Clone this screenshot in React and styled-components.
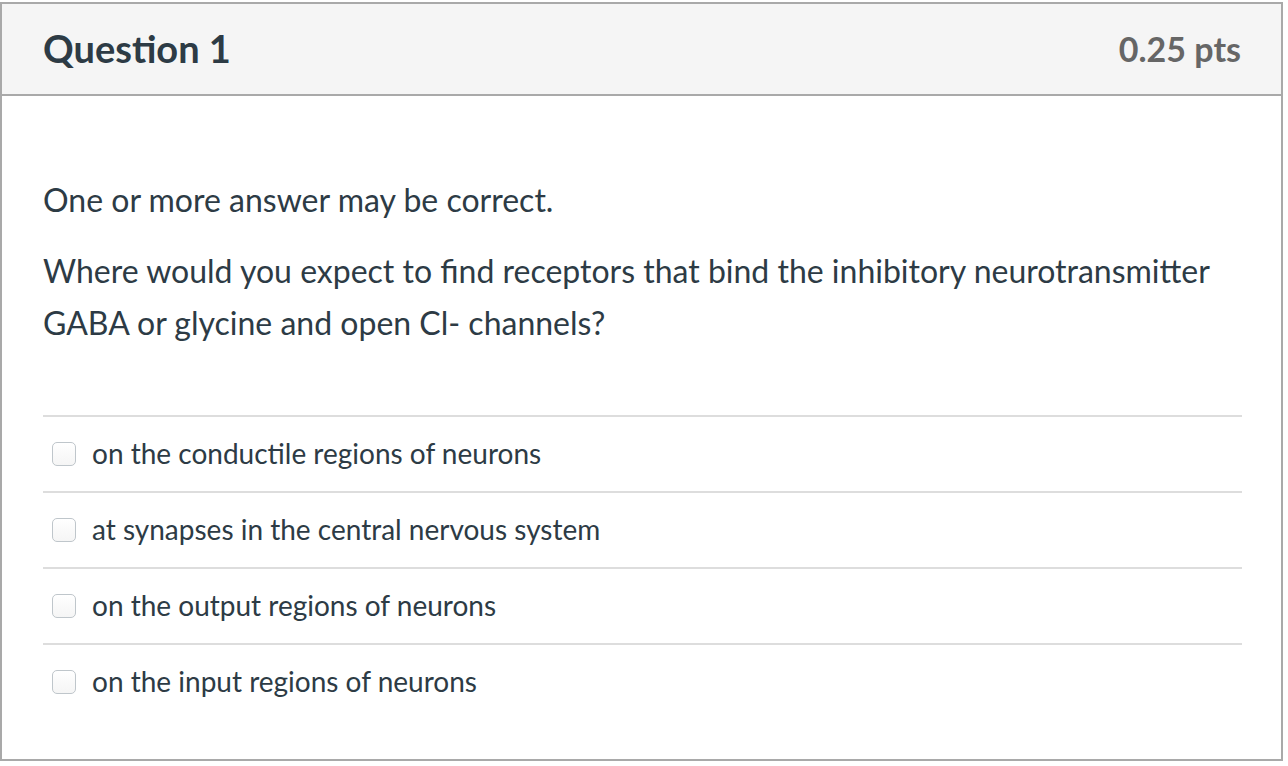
import React from 'react'
import styled, { createGlobalStyle } from 'styled-components'

const Global = createGlobalStyle`
  body {
    margin: 0;
    background: #fff;
    font-family: 'Lato', 'Liberation Sans', sans-serif;
    color: #2d3b45;
  }
`

const Card = styled.div`
  box-sizing: border-box;
  width: 1283px;
  height: 759px;
  margin-top: 2px;
  border: 2px solid #a9a9a9;
  display: flex;
  flex-direction: column;
`

const Header = styled.div`
  box-sizing: border-box;
  height: 92px;
  background: #f5f5f5;
  border-bottom: 2px solid #a9a9a9;
  display: flex;
  align-items: center;
  justify-content: space-between;
  padding: 0 40px 2px 41px;
`

const Title = styled.h2`
  margin: 0;
  font-size: 38px;
  font-weight: 700;
  color: #2d3b45;
`

const Points = styled.div`
  font-size: 34px;
  font-weight: 700;
  color: #666;
`

const Body = styled.div`
  padding: 78px 39px 0 41px;
`

const Paragraph = styled.p`
  margin: 0 0 19px;
  font-size: 32px;
  line-height: 52px;
`

const Answers = styled.div`
  margin-top: 66px;
`

const Row = styled.label`
  box-sizing: border-box;
  display: flex;
  align-items: center;
  height: 76px;
  padding: 0 0 3px 9px;
  border-top: 2px solid #dddddd;
  font-size: 28px;
`

const Box = styled.span`
  box-sizing: border-box;
  width: 24px;
  height: 24px;
  margin: 2px 16px 0 0;
  border: 1px solid #bfc6cb;
  border-radius: 5px;
  background: linear-gradient(#ffffff, #f5f5f5);
  flex-shrink: 0;
`

const answers = [
  'on the conductile regions of neurons',
  'at synapses in the central nervous system',
  'on the output regions of neurons',
  'on the input regions of neurons',
]

export default function App() {
  return (
    <>
      <Global />
      <Card>
        <Header>
          <Title>Question 1</Title>
          <Points>0.25 pts</Points>
        </Header>
        <Body>
          <Paragraph>One or more answer may be correct.</Paragraph>
          <Paragraph>
            Where would you expect to find receptors that bind the inhibitory neurotransmitter GABA or glycine and open Cl- channels?
          </Paragraph>
          <Answers>
            {answers.map((a) => (
              <Row key={a}>
                <Box />
                {a}
              </Row>
            ))}
          </Answers>
        </Body>
      </Card>
    </>
  )
}
